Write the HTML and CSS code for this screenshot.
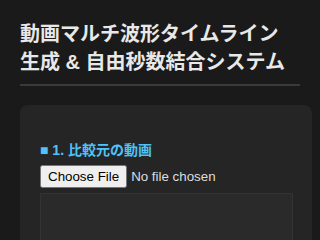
FILE: index.html
```html
<!DOCTYPE html>
<html lang="ja">
<head>
<meta charset="utf-8">
<link rel="stylesheet" href="styles.css">
</head>
<body>
<div class="page">
  <h1 class="title">動画マルチ波形タイムライン<br>生成 &amp; 自由秒数結合システム</h1>
  <section class="card">
    <h2 class="section-title">■ 1. 比較元の動画</h2>
    <input class="file" type="file">
    <div class="preview"></div>
  </section>
</div>
</body>
</html>
```

FILE: styles.css
```css
html, body {
  margin: 0;
  padding: 0;
  background: #1a1a1a;
  color: #e0e0e0;
  font-family: "Liberation Sans", "Noto Sans CJK JP", sans-serif;
}
.page {
  padding: 20px;
  width: 280px;
}
.title {
  margin: 0;
  font-size: 20px;
  line-height: 28px;
  font-weight: bold;
  color: #e8e8e8;
  padding-bottom: 8px;
  border-bottom: 2px solid #3a3a3a;
}
.card {
  margin-top: 19px;
  width: 292px;
  box-sizing: border-box;
  background: #252525;
  border-radius: 8px;
  padding: 35px 19px 20px 20px;
}
.section-title {
  margin: 0 0 5px;
  font-size: 14px;
  line-height: 20px;
  font-weight: bold;
  color: #4fc3f7;
}
.file {
  display: block;
  font-family: "Liberation Sans", sans-serif;
  font-size: 13.33px;
  color: #dddddd;
}
.file::file-selector-button {
  font-family: "Liberation Sans", sans-serif;
  font-size: 13.33px;
  padding: 2px 6px;
  margin-right: 4px;
}
.preview {
  margin-top: 5px;
  height: 120px;
  background: #2a2a2a;
  border: 1px solid #333333;
}
```
